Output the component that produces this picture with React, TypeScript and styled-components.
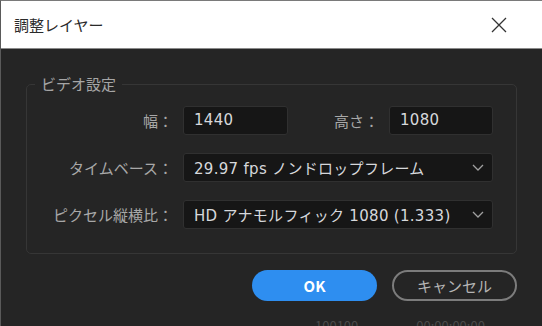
import styled, { createGlobalStyle } from "styled-components";

const GlobalStyle = createGlobalStyle`
  html, body {
    margin: 0;
    padding: 0;
    background: #252525;
  }
  body {
    font-family: "Noto Sans CJK JP", "Noto Sans", sans-serif;
  }
`;

const Window = styled.div`
  width: 542px;
  height: 326px;
  box-sizing: border-box;
  overflow: hidden;
  display: flex;
  flex-direction: column;
  background: #252525;
  border-left: 1px solid #5a5a5a;
  border-top: 1px solid #7a7a7a;
`;

const TitleBar = styled.div`
  height: 47px;
  flex: none;
  display: flex;
  align-items: center;
  justify-content: space-between;
  padding: 0 35px 0 13px;
  background: #ffffff;
  border-bottom: 1px solid #8a8a8a;
`;

const Title = styled.div`
  font-size: 15px;
  color: #2a2a2a;
`;

const CloseIcon = () => (
  <svg width="16" height="16" viewBox="0 0 16 16">
    <path d="M1 1 L15 15 M15 1 L1 15" stroke="#333" strokeWidth="1.3" fill="none" />
  </svg>
);

const Body = styled.div`
  flex: 1;
  display: flex;
  flex-direction: column;
  padding: 26px 25px 0 25px;
`;

const Group = styled.fieldset`
  margin: 0;
  padding: 12px 0 24px 0;
  border: 1px solid #363636;
  border-radius: 5px;
  display: flex;
  flex-direction: column;
  gap: 17px;
`;

const Legend = styled.legend`
  margin-left: 8px;
  padding: 0 6px;
  font-size: 15px;
  color: #a6a6a6;
  line-height: 18px;
`;

const Row = styled.div`
  display: flex;
  align-items: center;
  height: 30px;
`;

const Label = styled.label<{ $w: number }>`
  width: ${(p) => p.$w}px;
  flex: none;
  text-align: right;
  padding-right: 10px;
  box-sizing: border-box;
  font-size: 15px;
  color: #a8a8a8;
  white-space: nowrap;
`;

const Field = styled.div<{ $w: number }>`
  width: ${(p) => p.$w}px;
  height: 29px;
  flex: none;
  box-sizing: border-box;
  display: flex;
  align-items: center;
  justify-content: space-between;
  padding: 0 8px 0 10px;
  background: #161616;
  border: 1px solid #303030;
  border-radius: 3px;
  font-family: "DejaVu Sans", "Noto Sans CJK JP", sans-serif;
  font-size: 15px;
  letter-spacing: 0.3px;
  color: #d6d8dc;
  white-space: nowrap;
`;

const Chevron = () => (
  <svg width="12" height="7" viewBox="0 0 12 7">
    <path d="M1 1 L6 6 L11 1" stroke="#a0a0a0" strokeWidth="1.3" fill="none" />
  </svg>
);

const Footer = styled.div`
  display: flex;
  justify-content: flex-end;
  gap: 15px;
  margin-top: 16px;
`;

const Button = styled.button<{ $primary?: boolean }>`
  width: 125px;
  height: 31px;
  box-sizing: border-box;
  border-radius: 16px;
  font-family: inherit;
  font-size: 15px;
  cursor: pointer;
  background: ${(p) => (p.$primary ? "#2e8ef0" : "transparent")};
  border: ${(p) => (p.$primary ? "none" : "2px solid #7c7c7c")};
  color: ${(p) => (p.$primary ? "#ffffff" : "#b4b4b4")};
  font-weight: ${(p) => (p.$primary ? 700 : 400)};
`;

const Behind = styled.div`
  display: flex;
  gap: 58px;
  padding-left: 289px;
  margin-top: 18px;
  font-size: 13px;
  line-height: 14px;
  color: #4a4a4a;
`;

export default function App() {
  return (
    <>
      <GlobalStyle />
      <Window>
        <TitleBar>
          <Title>調整レイヤー</Title>
          <CloseIcon />
        </TitleBar>
        <Body>
          <Group>
            <Legend>ビデオ設定</Legend>
            <Row>
              <Label $w={156}>幅：</Label>
              <Field $w={105}>1440</Field>
              <Label $w={101}>高さ：</Label>
              <Field $w={104}>1080</Field>
            </Row>
            <Row>
              <Label $w={156}>タイムベース：</Label>
              <Field $w={310}>
                29.97 fps ノンドロップフレーム
                <Chevron />
              </Field>
            </Row>
            <Row>
              <Label $w={156}>ピクセル縦横比：</Label>
              <Field $w={310}>
                HD アナモルフィック 1080 (1.333)
                <Chevron />
              </Field>
            </Row>
          </Group>
          <Footer>
            <Button $primary>OK</Button>
            <Button>キャンセル</Button>
          </Footer>
          <Behind>
            <span>100100</span>
            <span>00:00:00:00</span>
          </Behind>
        </Body>
      </Window>
    </>
  );
}
